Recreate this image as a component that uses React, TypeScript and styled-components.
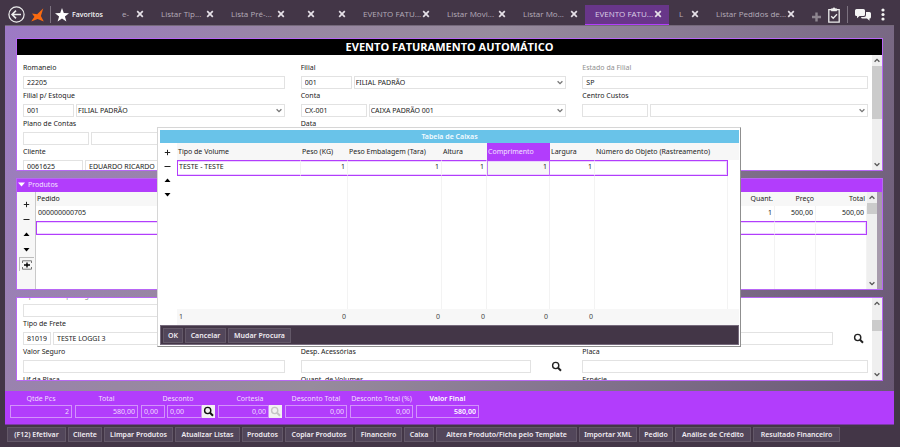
import React from "react";
import styled, { createGlobalStyle, css } from "styled-components";

const accent = "#b23dfc";
const dark = "#433647";
const line = "#e2e2e2";
const font = '"Noto Sans", "Open Sans", sans-serif';

const GlobalStyle = createGlobalStyle`
  *, *::before, *::after { box-sizing: border-box; }
  body { margin: 0; background: ${dark}; font-family: ${font}; font-size: 7px; line-height: 10px; color: #222; }
  button, input, select { font: inherit; color: inherit; margin: 0; border-radius: 0; }
  button { cursor: pointer; padding: 0; border: 0; background: none; }
`;

const Shell = styled.div`
  min-height: 100vh;
  display: flex;
  flex-direction: column;
  padding: 0 6px 0 5px;
  background: ${dark};
`;

/* ---------- top bar ---------- */
const TopBar = styled.header`
  display: flex;
  align-items: center;
  height: 26px;
  color: #fff;
`;
const IconButton = styled.button`
  display: flex;
  align-items: center;
  justify-content: center;
  color: #fff;
`;
const Home = styled.div`
  display: flex;
  align-items: center;
  gap: 6px;
  width: 107px;
  flex: none;
  padding: 3px 0 0 3px;
`;
const Divider = styled.span`
  width: 1px;
  height: 17px;
  background: #7c7280;
`;
const Favorites = styled.button`
  display: flex;
  align-items: center;
  gap: 3px;
  font-weight: 500;
  color: #fff;
  margin-left: -2px;
`;
const Tabs = styled.nav`
  display: flex;
  flex: none;
  height: 21px;
  margin-top: 4px;
`;
const Tab = styled.div<{ $w: number; $active?: boolean }>`
  display: flex;
  align-items: center;
  justify-content: space-between;
  width: ${(p) => p.$w}px;
  padding: 0 7px 0 10px;
  border-bottom: 2px solid ${(p) => (p.$active ? accent : "transparent")};
  background: ${(p) => (p.$active ? "#683689" : "transparent")};
  color: ${(p) => (p.$active ? "#dccfe6" : "#b5acb9")};
`;
const TabLabel = styled.button`
  font-family: "Open Sans", sans-serif;
  font-size: 8px;
  font-weight: 400;
  line-height: 10px;
  padding-bottom: 1px;
  white-space: nowrap;
`;
const TopTools = styled.div`
  display: flex;
  align-items: center;
  gap: 7px;
  margin-left: auto;
  padding: 3px 6px 0 0;
`;

/* ---------- workspace ---------- */
const Workspace = styled.main`
  display: flex;
  flex-direction: column;
  gap: 7px;
  padding: 12px 11px 10px;
  border-top: 1px solid #75697b;
  margin-top: -1px;
  background: linear-gradient(118deg, #9d79c6 0%, #9887a2 28%, #978b9d 46%, #857590 68%, #695874 100%);
`;
const Panel = styled.section<{ $h: number }>`
  display: flex;
  flex-direction: column;
  height: ${(p) => p.$h}px;
  border: 1px solid #b866f5;
  background: #fff;
  overflow: hidden;
`;
const Title = styled.h1`
  margin: 0;
  flex: none;
  height: 16px;
  background: #000;
  color: #fff;
  font: bold 11px/15px "Open Sans", sans-serif;
  text-align: center;
`;
const PaneBody = styled.div`
  display: flex;
  flex: 1;
  min-height: 0;
`;
const FormGrid = styled.div<{ $scrolled?: boolean }>`
  flex: 1;
  display: grid;
  grid-template-columns: 262fr 266fr 286fr;
  grid-auto-rows: 28px;
  column-gap: 16px;
  padding: 6px 4px 0 6px;
  margin-top: ${(p) => (p.$scrolled ? -15 : 0)}px;
`;
const FieldBox = styled.div<{ $muted?: boolean }>`
  display: flex;
  flex-direction: column;
  min-width: 0;
  label {
    height: 15px;
    line-height: 14px;
    white-space: nowrap;
    color: ${(p) => (p.$muted ? "#8f8f8f" : "#222")};
  }
`;
const Inputs = styled.div`
  display: flex;
  gap: 2px;
  height: 13px;
`;
const TextInput = styled.input<{ $w?: number }>`
  flex: ${(p) => (p.$w ? `0 0 ${p.$w}px` : "1 1 0")};
  width: 0;
  min-width: 0;
  height: 13px;
  padding: 0 3px;
  border: 1px solid ${line};
  background: #fff;
  outline: 0;
`;
const SelectBox = styled.span`
  position: relative;
  flex: 1;
  display: flex;
  min-width: 0;
  color: #777;
  svg {
    position: absolute;
    right: 3px;
    top: 4px;
    pointer-events: none;
  }
`;
const Select = styled.select`
  appearance: none;
  flex: 1;
  min-width: 0;
  height: 13px;
  padding: 0 1px;
  border: 1px solid ${line};
  background: #fff;
  color: #222;
  outline: 0;
`;
const SearchSlot = styled.button`
  flex: 0 0 33px;
  display: flex;
  align-items: center;
  justify-content: flex-end;
  padding-right: 4px;
`;

/* ---------- scroll bar ---------- */
const Track = styled.div`
  flex: 0 0 10px;
  display: flex;
  flex-direction: column;
  align-items: center;
  background: #efefef;
`;
const ScrollButton = styled.button`
  height: 11px;
  width: 10px;
  display: flex;
  align-items: center;
  justify-content: center;
  color: #555;
`;
const Thumb = styled.div<{ $gap: number; $h: number }>`
  width: 100%;
  height: ${(p) => p.$h}px;
  margin: ${(p) => p.$gap}px 0 auto;
  background: #cbcbcb;
`;

/* ---------- product table ---------- */
const PanelHeader = styled.button`
  flex: none;
  display: flex;
  align-items: center;
  gap: 3px;
  height: 13px;
  padding: 0 0 2px 1px;
  background: ${accent};
  color: #f3e3ff;
`;
const SideTools = styled.div<{ $plain?: boolean }>`
  display: flex;
  flex-direction: column;
  align-items: center;
  color: #222;
  ${(p) =>
    p.$plain
      ? css`
          flex: 0 0 16px;
          padding: 2px 2px 0 0;
        `
      : css`
          flex: 0 0 19px;
          gap: 1px;
          padding-top: 5px;
          background: #f7f7f7;
          border-right: 1px solid #c9c9c9;
        `}
`;
const SideTool = styled.button<{ $boxed?: boolean }>`
  display: flex;
  align-items: center;
  justify-content: center;
  width: 15px;
  height: 14px;
  flex: none;
  ${(p) => p.$boxed && "border-left: 1px solid #bbb; border-top: 1px solid #bbb;"}
`;
const DataTable = styled.table`
  flex: 1;
  min-width: 0;
  width: 0;
  table-layout: fixed;
  border-collapse: separate;
  border-spacing: 0;
`;
const Th = styled.th<{ $w?: number; $right?: boolean; $active?: boolean; $h?: number }>`
  width: ${(p) => (p.$w ? `${p.$w}px` : "auto")};
  height: ${(p) => p.$h ?? 14}px;
  padding: 0 2px 0 1px;
  font-weight: 400;
  text-align: ${(p) => (p.$right ? "right" : "left")};
  white-space: nowrap;
  background: ${(p) => (p.$active ? accent : "#f7f7f7")};
  color: ${(p) => (p.$active ? "#f3e3ff" : "#222")};
`;
const Td = styled.td<{ $right?: boolean; $h: number; $selected?: boolean; $edge?: "first" | "last"; $active?: boolean; $total?: boolean; $bare?: boolean }>`
  height: ${(p) => p.$h}px;
  padding: 0 2px 1px;
  text-align: ${(p) => (p.$right ? "right" : "left")};
  white-space: nowrap;
  border-right: 1px solid ${(p) => (p.$bare || p.$total ? "transparent" : "#f3f3f3")};
  ${(p) =>
    p.$selected &&
    css`
      padding-bottom: 3px;
      border-top: 1px solid ${accent};
      border-bottom: 1px solid ${accent};
      box-shadow: inset 0 1px #ecd2ff, inset 0 -1px #ecd2ff;
    `}
  ${(p) => p.$edge === "first" && `border-left: 1px solid ${accent}; padding-left: 1px;`}
  ${(p) => p.$edge === "last" && `border-right: 1px solid ${accent}; box-shadow: inset -1px 0 #ecd2ff, inset 0 1px #ecd2ff, inset 0 -1px #ecd2ff;`}
  ${(p) => p.$active && "background: #f7f7f7; border-left: 1px solid #c67bfa; border-right: 1px solid #c67bfa;"}
  ${(p) => p.$total && "background: #f7f7f7; color: #444; padding-right: 1px;"}
`;
const TailStrip = styled.div`
  flex: 0 0 5px;
  background: #a79bac;
`;

/* ---------- dialog ---------- */
const Dialog = styled.div`
  position: absolute;
  left: 157px;
  right: 159px;
  top: 127px;
  padding: 2px 1px 1px 2px;
  border: 1px solid #d6d6d6;
  border-right-color: #8f8f8f;
  border-bottom-color: #8f8f8f;
  background: #fff;
`;
const DialogTitle = styled.h2`
  margin: 0;
  height: 13px;
  background: #69c3e9;
  color: #f4fbff;
  font-size: 7px;
  line-height: 13px;
  font-weight: 600;
  text-align: center;
`;
const DialogBody = styled.div`
  display: flex;
`;
const DialogActions = styled.div`
  display: flex;
  gap: 2px;
  padding: 2px 2px 1px;
  border: 1px solid #75697b;
  background: ${dark};
`;
const ActionButton = styled.button<{ $w: number }>`
  width: ${(p) => p.$w}px;
  height: 15px;
  flex: none;
  border: 1px solid #635868;
  background: #52465a;
  color: #f0ecf2;
  font-weight: 600;
  white-space: nowrap;
`;

/* ---------- totals ---------- */
const Totals = styled.footer`
  display: flex;
  gap: 3px;
  padding: 2px 5px 6px;
  background: ${accent};
  color: #f1dcff;
  border-bottom: 1px solid #7b3ba6;
`;
const Total = styled.div<{ $w: number; $strong?: boolean }>`
  width: ${(p) => p.$w}px;
  font-weight: ${(p) => (p.$strong ? 600 : 400)};
  color: ${(p) => (p.$strong ? "#fff" : "inherit")};
  label {
    display: block;
    height: 12px;
    line-height: 12px;
    text-align: center;
    white-space: nowrap;
  }
`;
const TotalInputs = styled.div`
  display: flex;
`;
const TotalInput = styled.input<{ $w?: number; $left?: boolean }>`
  flex: ${(p) => (p.$w ? `0 0 ${p.$w}px` : "1 1 0")};
  width: 0;
  min-width: 0;
  height: 13px;
  margin-right: ${(p) => (p.$w ? 2 : 0)}px;
  padding: 0 2px;
  border: 1px solid #d392fb;
  background: transparent;
  outline: 0;
  text-align: ${(p) => (p.$left ? "left" : "right")};
`;
const TotalSearch = styled.button<{ $off?: boolean }>`
  flex: 0 0 13px;
  height: 13px;
  display: flex;
  align-items: center;
  justify-content: center;
  background: #f1f1f1;
  color: ${(p) => (p.$off ? "#c4c4c4" : "#111")};
`;
const BottomActions = styled.div`
  display: flex;
  gap: 2px;
  padding: 2px 2px 5px;
`;

/* ---------- drawings ---------- */
const Close = () => (
  <svg width="8" height="8" viewBox="0 0 8 8" stroke="#e6e1e8" strokeWidth="1.7">
    <path d="M1.2 1.2 6.8 6.8M6.8 1.2 1.2 6.8" />
  </svg>
);
const Chevron = ({ up }: { up?: boolean }) => (
  <svg width="6" height="5" viewBox="0 0 6 5" fill="none" stroke="currentColor" strokeWidth="1.3">
    <path d={up ? "M.6 3.8 3 1.4 5.4 3.8" : "M.6 1.2 3 3.6 5.4 1.2"} />
  </svg>
);
const Search = () => (
  <svg width="11" height="11" viewBox="0 0 11 11" fill="none" stroke="currentColor">
    <circle cx="4.7" cy="4.5" r="3.1" strokeWidth="1.4" />
    <path d="M7 6.8 10 9.8" strokeWidth="2" />
  </svg>
);
const Glyph = ({ d, stroke }: { d: string; stroke?: boolean }) => (
  <svg width="7" height="7" viewBox="0 0 7 7" fill={stroke ? "none" : "#000"} stroke={stroke ? "#222" : "none"}>
    <path d={d} />
  </svg>
);
const glyphs = { plus: "M3.5 .8V6.2M.8 3.5H6.2", minus: "M.5 3.5H6.5", up: "M3.5 1.5 6.5 5H.5Z", down: "M3.5 5.5 .5 2H6.5Z" };

const MoveTools = () => (
  <>
    <SideTool aria-label="Adicionar"><Glyph d={glyphs.plus} stroke /></SideTool>
    <SideTool aria-label="Remover"><Glyph d={glyphs.minus} stroke /></SideTool>
    <SideTool aria-label="Subir"><Glyph d={glyphs.up} /></SideTool>
    <SideTool aria-label="Descer"><Glyph d={glyphs.down} /></SideTool>
  </>
);

const ScrollBar = ({ gap, size }: { gap: number; size: number }) => (
  <Track>
    <ScrollButton aria-label="Rolar para cima"><Chevron up /></ScrollButton>
    <Thumb $gap={gap} $h={size} />
    <ScrollButton aria-label="Rolar para baixo"><Chevron /></ScrollButton>
  </Track>
);

type FieldProps = { id: string; label: string; code?: string; codeWidth?: number; value?: string; kind?: "text" | "select"; search?: boolean; muted?: boolean };
const Field = ({ id, label, code, codeWidth, value = "", kind = "text", search, muted }: FieldProps) => (
  <FieldBox $muted={muted}>
    <label htmlFor={id}>{label}</label>
    <Inputs>
      {codeWidth && <TextInput id={id} $w={codeWidth} defaultValue={code} />}
      {kind === "select" ? (
        <SelectBox>
          <Select aria-label={label} defaultValue={value}><option>{value}</option></Select>
          <Chevron />
        </SelectBox>
      ) : (
        <TextInput id={codeWidth ? undefined : id} aria-label={label || id} defaultValue={value} />
      )}
      {search && <SearchSlot aria-label={`Procurar ${label}`}><Search /></SearchSlot>}
    </Inputs>
  </FieldBox>
);

const tabs: { text: string; w: number; active?: boolean }[] = [
  { text: "e-", w: 39 },
  { text: "Listar Tip...", w: 70 },
  { text: "Lista Pré-...", w: 71 },
  { text: "", w: 30 },
  { text: "", w: 31 },
  { text: "EVENTO FATU...", w: 84 },
  { text: "Listar Movi...", w: 76 },
  { text: "Listar Mo...", w: 72 },
  { text: "EVENTO FATU...", w: 84, active: true },
  { text: "L", w: 37 },
  { text: "Listar Pedidos de...", w: 96 },
];

const actions: [string, number][] = [
  ["(F12) Efetivar", 59], ["Cliente", 34], ["Limpar Produtos", 69], ["Atualizar Listas", 65], ["Produtos", 41],
  ["Copiar Produtos", 68], ["Financeiro", 47], ["Caixa", 30], ["Altera Produto/Ficha pelo Template", 141],
  ["Importar XML", 58], ["Pedido", 34], ["Análise de Crédito", 76], ["Resultado Financeiro", 87],
];

const boxColumns: { text: string; w: number; active?: boolean }[] = [
  { text: "Peso (KG)", w: 47 },
  { text: "Peso Embalagem (Tara)", w: 94 },
  { text: "Altura", w: 45 },
  { text: "Comprimento", w: 63, active: true },
  { text: "Largura", w: 45 },
];

export default function App() {
  return (
    <>
      <GlobalStyle />
      <Shell>
        <TopBar>
          <Home>
            <IconButton aria-label="Voltar">
              <svg width="17" height="17" viewBox="0 0 17 17" fill="none" stroke="#eee">
                <circle cx="8.5" cy="8.5" r="7.6" strokeWidth="1.2" />
                <path d="M13 8.5H4.5M8 4.6 4.1 8.5 8 12.4" strokeWidth="1.6" />
              </svg>
            </IconButton>
            <svg width="13" height="14" viewBox="0 0 13 14" fill="#fa6a10">
              <path d="M12.3 .2 9.9 8 12.8 13.4 6.6 11 .2 13.6 3.4 8.8 1 5.4 6.2 6.2Z" />
            </svg>
            <Divider />
            <Favorites>
              <svg width="14" height="14" viewBox="0 0 14 14" fill="#fff">
                <path d="M7 0 8.8 4.9 14 5.2 9.9 8.4 11.4 13.6 7 10.6 2.6 13.6 4.1 8.4 0 5.2 5.2 4.9Z" />
              </svg>
              Favoritos
            </Favorites>
          </Home>
          <Tabs>
            {tabs.map((t, i) => (
              <Tab key={i} $w={t.w} $active={t.active}>
                <TabLabel>{t.text}</TabLabel>
                <IconButton aria-label="Fechar aba"><Close /></IconButton>
              </Tab>
            ))}
          </Tabs>
          <TopTools>
            <IconButton aria-label="Nova aba">
              <svg width="9" height="15" viewBox="0 0 9 15" stroke="#8d858f" strokeWidth="2.4"><path d="M4.5 5.5V14.5M0 10H9" /></svg>
            </IconButton>
            <IconButton aria-label="Tarefas">
              <svg width="12" height="16" viewBox="0 0 12 16" fill="none" stroke="#eee" strokeWidth="1.3">
                <path d="M.8 2.6H11.2V15.2H.8Z" />
                <path d="M3.2 3.9V1.8H4.6A1.5 1.5 0 0 1 7.4 1.8H8.8V3.9Z" fill="#eee" strokeWidth=".6" />
                <path d="M3.2 9.2 5.2 11.2 9 7.2" />
              </svg>
            </IconButton>
            <Divider />
            <IconButton aria-label="Mensagens">
              <svg width="16" height="12" viewBox="0 0 16 12" fill="#f4f4f4">
                <path d="M1.5 0H8.5Q10 0 10 1.5V5.5Q10 7 8.5 7H4.5L2 9.3V7H1.5Q0 7 0 5.5V1.5Q0 0 1.5 0Z" />
                <path d="M11 3H14.5Q16 3 16 4.5V8Q16 9.5 14.5 9.5V11.8L12 9.5H7.5Q6.2 9.5 6 8H9Q11 8 11 6Z" />
              </svg>
            </IconButton>
            <IconButton aria-label="Menu">
              <svg width="10" height="13" viewBox="0 0 10 13" fill="#f4f4f4">
                <circle cx="5" cy="2" r="1.6" /><circle cx="5" cy="6.5" r="1.6" /><circle cx="5" cy="11" r="1.6" />
              </svg>
            </IconButton>
          </TopTools>
        </TopBar>

        <Workspace>
          <Panel $h={133}>
            <Title>EVENTO FATURAMENTO AUTOMÁTICO</Title>
            <PaneBody>
              <FormGrid>
                <Field id="romaneio" label="Romaneio" value="22205" />
                <Field id="filial" label="Filial" codeWidth={51} code="001" value="FILIAL PADRÃO" kind="select" />
                <Field id="estado" label="Estado da Filial" value="SP" muted />
                <Field id="estoque" label="Filial p/ Estoque" codeWidth={51} code="001" value="FILIAL PADRÃO" kind="select" />
                <Field id="conta" label="Conta" codeWidth={66} code="CX-001" value="CAIXA PADRÃO 001" kind="select" />
                <Field id="custos" label="Centro Custos" codeWidth={66} kind="select" />
                <Field id="plano" label="Plano de Contas" codeWidth={66} />
                <Field id="data" label="Data" />
                <span />
                <Field id="cliente" label="Cliente" codeWidth={60} code="0061625" value="EDUARDO RICARDO" />
              </FormGrid>
              <ScrollBar gap={0} size={53} />
            </PaneBody>
          </Panel>

          <Panel $h={112}>
            <PanelHeader><svg width="7" height="5" viewBox="0 0 7 5" fill="#fff"><path d="M0 .5H7L3.5 4.5Z" /></svg>Produtos</PanelHeader>
            <PaneBody>
              <SideTools>
                <MoveTools />
                <SideTool $boxed aria-label="Inserir linha">
                  <svg width="10" height="10" viewBox="0 0 10 10" fill="none" stroke="#777">
                    <path d="M.5 3V.8H9.5V3M.5 7V9.2H9.5V7" /><path d="M2 5H8M5 2.4V7.6" stroke="#000" strokeWidth="1.4" />
                  </svg>
                </SideTool>
              </SideTools>
              <DataTable>
                <thead>
                  <tr><Th>Pedido</Th><Th $w={60} $right>Quant.</Th><Th $w={41} $right>Preço</Th><Th $w={51} $right>Total</Th></tr>
                </thead>
                <tbody>
                  <tr><Td $h={15}>000000000705</Td><Td $h={15} $right>1</Td><Td $h={15} $right>500,00</Td><Td $h={15} $right>500,00</Td></tr>
                  <tr><Td $h={14} $selected $edge="first" /><Td $h={14} $selected /><Td $h={14} $selected /><Td $h={14} $selected $edge="last" /></tr>
                  <tr><Td $h={54} /><Td $h={54} /><Td $h={54} /><Td $h={54} /></tr>
                </tbody>
              </DataTable>
              <ScrollBar gap={0} size={11} />
              <TailStrip />
            </PaneBody>
          </Panel>

          <Panel $h={84}>
            <PaneBody>
              <FormGrid $scrolled>
                <Field id="tipocom" label="Tipo Com. Rep. Original do Pedido" muted />
                <span />
                <span />
                <Field id="frete" label="Tipo de Frete" codeWidth={28} code="81019" value="TESTE LOGGI 3" />
                <span />
                <Field id="transportadora" label="" search />
                <Field id="seguro" label="Valor Seguro" />
                <Field id="despesas" label="Desp. Acessórias" search />
                <Field id="placa" label="Placa" />
                <Field id="uf" label="Uf da Placa" />
                <Field id="volumes" label="Quant. de Volumes" />
                <Field id="especie" label="Espécie" />
              </FormGrid>
              <ScrollBar gap={11} size={11} />
            </PaneBody>
          </Panel>
        </Workspace>

        <Totals>
          <Total $w={62}><label htmlFor="pcs">Qtde Pcs</label><TotalInputs><TotalInput id="pcs" defaultValue="2" /></TotalInputs></Total>
          <Total $w={63}><label htmlFor="total">Total</label><TotalInputs><TotalInput id="total" defaultValue="580,00" /></TotalInputs></Total>
          <Total $w={74}>
            <label htmlFor="desc">Desconto</label>
            <TotalInputs>
              <TotalInput id="desc" $w={24} $left defaultValue="0,00" />
              <TotalInput aria-label="Desconto em valor" $left defaultValue="0,00" />
              <TotalSearch aria-label="Procurar desconto"><Search /></TotalSearch>
            </TotalInputs>
          </Total>
          <Total $w={64}>
            <label htmlFor="cortesia">Cortesia</label>
            <TotalInputs><TotalInput id="cortesia" defaultValue="0,00" /><TotalSearch $off aria-label="Procurar cortesia"><Search /></TotalSearch></TotalInputs>
          </Total>
          <Total $w={62}><label htmlFor="dt">Desconto Total</label><TotalInputs><TotalInput id="dt" defaultValue="0,00" /></TotalInputs></Total>
          <Total $w={63}><label htmlFor="dtp">Desconto Total (%)</label><TotalInputs><TotalInput id="dtp" defaultValue="0,00" /></TotalInputs></Total>
          <Total $w={63} $strong><label htmlFor="vf">Valor Final</label><TotalInputs><TotalInput id="vf" defaultValue="580,00" /></TotalInputs></Total>
        </Totals>
        <BottomActions>
          {actions.map(([text, w]) => <ActionButton key={text} $w={w}>{text}</ActionButton>)}
        </BottomActions>
      </Shell>

      <Dialog role="dialog" aria-labelledby="boxes-title">
        <DialogTitle id="boxes-title">Tabela de Caixas</DialogTitle>
        <DialogBody>
          <SideTools $plain><MoveTools /></SideTools>
          <DataTable>
            <thead>
              <tr>
                <Th $h={17} $w={124}>Tipo de Volume</Th>
                {boxColumns.map((c) => <Th key={c.text} $h={17} $w={c.w} $active={c.active}>{c.text}</Th>)}
                <Th $h={17}>Número do Objeto (Rastreamento)</Th>
                <Th $h={17} $w={11} />
              </tr>
            </thead>
            <tbody>
              <tr>
                <Td $h={16} $selected $edge="first">TESTE - TESTE</Td>
                {boxColumns.map((c) => <Td key={c.text} $h={16} $right $selected $active={c.active}>1</Td>)}
                <Td $h={16} $selected $edge="last" />
                <Td $h={16} $bare />
              </tr>
              <tr>
                <Td $h={133} $bare />
                {boxColumns.map((c) => <Td key={c.text} $h={133} />)}
                <Td $h={133} /><Td $h={133} $bare />
              </tr>
            </tbody>
            <tfoot>
              <tr>
                <Td $h={16} $total>1</Td>
                {boxColumns.map((c) => <Td key={c.text} $h={16} $right $total>0</Td>)}
                <Td $h={16} $total /><Td $h={16} $total />
              </tr>
            </tfoot>
          </DataTable>
        </DialogBody>
        <DialogActions>
          <ActionButton $w={20}>OK</ActionButton>
          <ActionButton $w={41}>Cancelar</ActionButton>
          <ActionButton $w={63}>Mudar Procura</ActionButton>
        </DialogActions>
      </Dialog>
    </>
  );
}
